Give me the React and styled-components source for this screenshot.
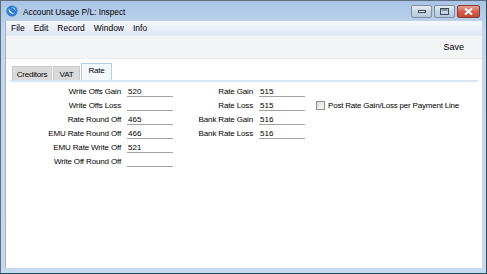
import styled, { createGlobalStyle } from 'styled-components'

const GlobalStyle = createGlobalStyle`
  html, body {
    margin: 0;
    padding: 0;
    background: #fff;
  }
  body {
    font-family: "Liberation Sans", "DejaVu Sans", Arial, sans-serif;
    font-size: 8px;
    color: #000;
  }
`

const Window = styled.div`
  width: 487px;
  height: 274px;
  box-sizing: border-box;
  border: 1px solid #5f6f80;
  border-bottom-color: #1f4d5c;
  border-right-color: #2c4a5a;
  background: linear-gradient(#a9c5e6, #c3d6ee 30px, #c7d9ef);
  display: flex;
  flex-direction: column;
  overflow: hidden;
`

const TitleBar = styled.div`
  height: 20px;
  display: flex;
  align-items: center;
  padding: 0 5px 0 5px;
  gap: 5px;
`

const Title = styled.span`
  font-size: 8.3px;
  color: #000;
  flex: 1;
  padding-top: 1px;
`

const WinButtons = styled.div`
  display: flex;
  gap: 2px;
  align-self: flex-start;
  margin-top: 4px;
  margin-right: 1px;
`

const WinButton = styled.div`
  width: ${p => p.$w}px;
  height: 13px;
  box-sizing: border-box;
  border: 1px solid ${p => p.$close ? '#8a3a30' : '#7d8ea3'};
  border-radius: 2px;
  background: ${p => p.$close
    ? 'linear-gradient(#e8a193, #d2604c 50%, #c04b36)'
    : 'linear-gradient(#e6edf6, #c9d6e6 50%, #b8c8dc)'};
  display: flex;
  align-items: center;
  justify-content: center;
`

const Frame = styled.div`
  flex: 1;
  display: flex;
  flex-direction: column;
  margin: 0 4px 5px 4px;
  border-left: 1px solid #9db5d3;
`

const MenuBar = styled.div`
  height: 14px;
  display: flex;
  align-items: center;
  padding-left: 5px;
  background: linear-gradient(#f6f8fc, #dfe6f4);
  border-bottom: 1px solid #e6eaf2;
`

const MenuItem = styled.span`
  padding-right: 9px;
  font-size: 8.5px;
`

const Toolbar = styled.div`
  height: 22px;
  display: flex;
  align-items: center;
  justify-content: flex-end;
  padding-right: 18px;
  background: #f3f4f6;
  border-bottom: 1px solid #e9ebee;
`

const ToolButton = styled.span`
  font-size: 9px;
`

const Content = styled.div`
  flex: 1;
  background: #fff;
  padding: 4px 4px 0 4px;
`

const TabRow = styled.div`
  display: flex;
  align-items: flex-end;
  height: 17px;
  padding-left: 2px;
  border-bottom: 2px solid #d7e6f6;
`

const Tab = styled.div`
  width: ${p => p.$w}px;
  height: ${p => p.$active ? 17 : 14}px;
  box-sizing: border-box;
  padding-top: ${p => p.$active ? 2 : 3}px;
  background: ${p => p.$active ? '#f4f8fd' : '#dadada'};
  border: 1px solid ${p => p.$active ? '#b4cde8' : '#c9c9c9'};
  border-bottom: none;
  margin-right: 1px;
  font-size: 8px;
  letter-spacing: -0.2px;
  text-align: center;
`

const Form = styled.div`
  display: flex;
  align-items: flex-start;
  padding-top: 2px;
`

const Column = styled.div`
  display: grid;
  grid-template-columns: ${p => p.$cols};
  grid-auto-rows: 14px;
  column-gap: 6px;
  margin-left: ${p => p.$offset || 0}px;
`

const Label = styled.span`
  text-align: right;
  align-self: center;
  font-size: 8px;
  letter-spacing: -0.15px;
  white-space: nowrap;
`

const Field = styled.span`
  align-self: stretch;
  box-sizing: border-box;
  border-bottom: 1px solid #a2a2a2;
  padding: 3px 0 0 1px;
  font-size: 8px;
  height: 13px;
`

const CheckCell = styled.label`
  display: flex;
  align-items: center;
  gap: 3px;
  margin-left: 5px;
  font-size: 8px;
  letter-spacing: -0.2px;
  white-space: nowrap;
`

const CheckBox = styled.span`
  width: 9px;
  height: 9px;
  box-sizing: border-box;
  border: 1px solid #8e8f8f;
  background: linear-gradient(135deg, #dcdcdc, #fbfbfb);
`

const AppIcon = () => (
  <svg width="12" height="12" viewBox="0 0 12 12">
    <circle cx="6" cy="6" r="5.6" fill="#2f7fd0" />
    <path d="M3 3.5 C 2 6.5, 4.5 9.5, 8.5 8.5 C 6 8.2, 4 6.5, 3 3.5 Z" fill="#fff" />
    <path d="M5.5 2.2 C 8 2.2, 9.8 4, 9.6 6.2 C 8.8 4.5, 7.4 3, 5.5 2.2 Z" fill="#dbeaf8" />
  </svg>
)

const leftRows = [
  ['Write Offs Gain', '520'],
  ['Write Offs Loss', ''],
  ['Rate Round Off', '465'],
  ['EMU Rate Round Off', '466'],
  ['EMU Rate Write Off', '521'],
  ['Write Off Round Off', ''],
]

const rightRows = [
  ['Rate Gain', '515'],
  ['Rate Loss', '515'],
  ['Bank Rate Gain', '516'],
  ['Bank Rate Loss', '516'],
]

export default function App() {
  return (
    <>
      <GlobalStyle />
      <Window>
        <TitleBar>
          <AppIcon />
          <Title>Account Usage P/L: Inspect</Title>
          <WinButtons>
            <WinButton $w={21}>
              <svg width="8" height="4"><rect x="0.5" y="0.5" width="7" height="2" fill="#fff" stroke="#3a4a5c" /></svg>
            </WinButton>
            <WinButton $w={21}>
              <svg width="9" height="7"><rect x="0.5" y="0.5" width="8" height="6" fill="none" stroke="#3a4a5c" /><rect x="1.5" y="1.5" width="6" height="1" fill="#3a4a5c" /></svg>
            </WinButton>
            <WinButton $w={23} $close>
              <svg width="9" height="7" viewBox="0 0 9 7"><path d="M1 0.5 L8 6.5 M8 0.5 L1 6.5" stroke="#fff" strokeWidth="2" /></svg>
            </WinButton>
          </WinButtons>
        </TitleBar>
        <Frame>
          <MenuBar>
            <MenuItem>File</MenuItem>
            <MenuItem>Edit</MenuItem>
            <MenuItem>Record</MenuItem>
            <MenuItem>Window</MenuItem>
            <MenuItem>Info</MenuItem>
          </MenuBar>
          <Toolbar>
            <ToolButton>Save</ToolButton>
          </Toolbar>
          <Content>
            <TabRow>
              <Tab $w={40}>Creditors</Tab>
              <Tab $w={27}>VAT</Tab>
              <Tab $w={31} $active>Rate</Tab>
            </TabRow>
            <Form>
              <Column $cols="111px 46px">
                {leftRows.map(([label, value]) => [
                  <Label key={label}>{label}</Label>,
                  <Field key={label + 'f'}>{value}</Field>,
                ])}
              </Column>
              <Column $cols="72px 46px auto" $offset={8}>
                {rightRows.map(([label, value], i) => [
                  <Label key={label}>{label}</Label>,
                  <Field key={label + 'f'}>{value}</Field>,
                  i === 1 ? (
                    <CheckCell key="cb">
                      <CheckBox />
                      Post Rate Gain/Loss per Payment Line
                    </CheckCell>
                  ) : <span key={label + 'e'} />,
                ])}
              </Column>
            </Form>
          </Content>
        </Frame>
      </Window>
    </>
  )
}
